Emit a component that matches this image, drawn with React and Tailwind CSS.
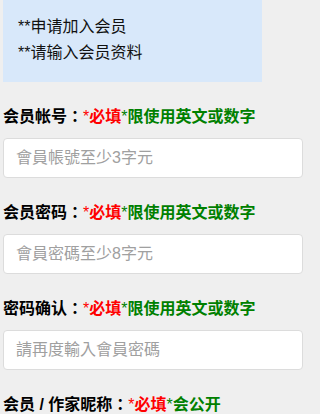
const fields = [
  { label: '会员帐号', hint: '限使用英文或数字', placeholder: '會員帳號至少3字元' },
  { label: '会员密码', hint: '限使用英文或数字', placeholder: '會員密碼至少8字元' },
  { label: '密码确认', hint: '限使用英文或数字', placeholder: '請再度輸入會員密碼' },
  { label: '会员 / 作家昵称', hint: '会公开', placeholder: '' },
];

function FieldLabel({ label, hint }) {
  return (
    <div className="mt-[22px] h-[22px] leading-[22px] text-[16px] font-bold whitespace-nowrap">
      <span className="text-black">{label}</span>
      <span className="text-black font-['Noto_Sans_CJK_TC',sans-serif]">：</span>
      <span className="text-[#ff0000] font-normal">*</span>
      <span className="text-[#ff0000]">必填</span>
      <span className="text-[#008000] font-normal">*</span>
      <span className="text-[#008000]">{hint}</span>
    </div>
  );
}

export default function App() {
  return (
    <div
      className="min-h-screen w-full overflow-hidden bg-[#efefef] pl-[3px]"
      style={{ fontFamily: '"Liberation Sans", "Noto Sans CJK SC", "Noto Sans CJK TC", sans-serif' }}
    >
      {/* Notice box */}
      <div className="w-[259px] bg-[#d8e8fa] pl-[15px] pt-[14px] pb-[16px] text-[16px] leading-[26px] text-[#111]">
        <p>**申请加入会员</p>
        <p>**请输入会员资料</p>
      </div>

      {fields.map((f, i) => (
        <div key={i}>
          <FieldLabel label={f.label} hint={f.hint} />
          {i < 3 && (
            <input
              type="text"
              placeholder={f.placeholder}
              className="mt-[12px] block h-[40px] w-[300px] rounded-[4px] border border-[#dcdcdc] bg-white px-[12px] text-[16px] placeholder:text-[#a0a0a0] outline-none"
              style={{ fontFamily: '"Liberation Sans", "Noto Sans CJK TC", sans-serif' }}
            />
          )}
        </div>
      ))}
    </div>
  );
}
